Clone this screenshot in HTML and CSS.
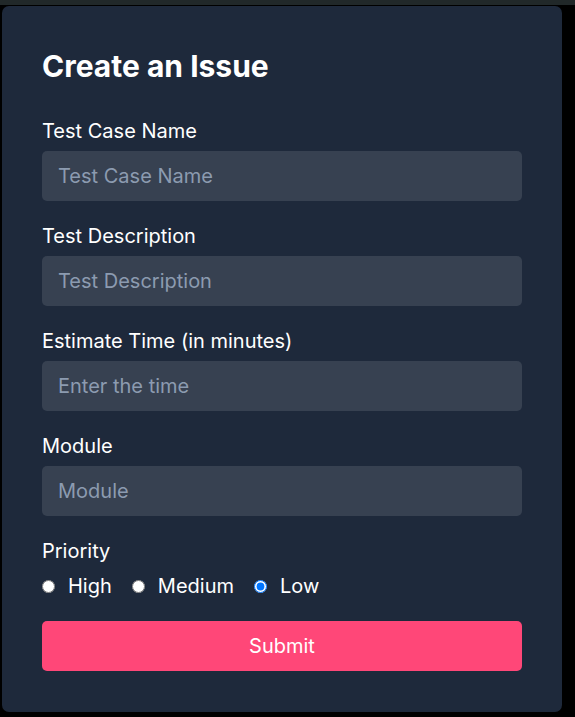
FILE: index.html
```html
<!DOCTYPE html>
<html>
<head>
<meta charset="utf-8">
<link rel="stylesheet" href="styles.css">
</head>
<body>
<div class="topbar"></div>
<form class="card">
  <h1 class="title">Create an Issue</h1>
  <div class="field">
    <label class="label">Test Case Name</label>
    <input class="input" type="text" placeholder="Test Case Name">
  </div>
  <div class="field">
    <label class="label">Test Description</label>
    <input class="input" type="text" placeholder="Test Description">
  </div>
  <div class="field">
    <label class="label">Estimate Time (in minutes)</label>
    <input class="input" type="text" placeholder="Enter the time">
  </div>
  <div class="field">
    <label class="label">Module</label>
    <input class="input" type="text" placeholder="Module">
  </div>
  <div class="field priority">
    <label class="label">Priority</label>
    <div class="radios">
      <label class="opt"><input type="radio" name="p"> High</label>
      <label class="opt"><input type="radio" name="p"> Medium</label>
      <label class="opt"><input type="radio" name="p" checked> Low</label>
    </div>
  </div>
  <button class="submit" type="button">Submit</button>
</form>
</body>
</html>
```
FILE: styles.css
```css
html, body {
  margin: 0;
  padding: 0;
  background: #000;
  font-family: Inter, "Noto Sans", sans-serif;
  color: #fff;
}
.topbar {
  height: 5px;
  background: #212829;
}
.card {
  box-sizing: border-box;
  width: 560px;
  margin: 1px 0 0 2px;
  background: #1e293b;
  border-radius: 7px;
  padding: 40px 40px 41px;
}
.title {
  margin: 0 0 33px;
  font-size: 30px;
  line-height: 40px;
  font-weight: 700;
}
.field {
  display: flex;
  flex-direction: column;
  margin-bottom: 23px;
}
.label {
  font-size: 20px;
  line-height: 24px;
  margin-bottom: 8px;
}
.input {
  box-sizing: border-box;
  height: 50px;
  width: 100%;
  border: none;
  outline: none;
  border-radius: 5px;
  background: #374151;
  color: #fff;
  font-family: inherit;
  font-size: 20px;
  padding: 0 16px;
}
.input::placeholder {
  color: #8c9bb0;
}
.priority {
  margin-bottom: 20px;
}
.priority .label {
  margin-bottom: 8px;
}
.radios {
  display: flex;
  gap: 20px;
  height: 30px;
  align-items: center;
}
.opt {
  font-size: 20px;
  display: flex;
  align-items: center;
  gap: 13px;
}
.opt input {
  margin: 0;
  width: 13px;
  height: 13px;
}
.submit {
  display: block;
  width: 100%;
  height: 50px;
  border: none;
  border-radius: 5px;
  background: #ff4778;
  color: #fff;
  font-family: inherit;
  font-size: 20px;
}
```
